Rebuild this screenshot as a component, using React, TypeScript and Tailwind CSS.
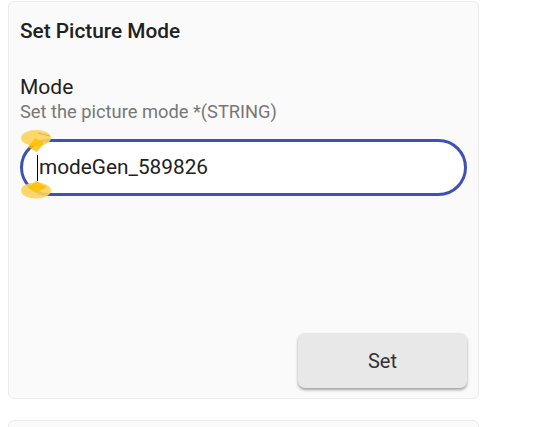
import { FC } from "react";

// selection handles drawn over the left end of the input
const Handles: FC = () => (
  <svg width="40" height="80" viewBox="0 0 40 80" className="absolute left-0 -top-[12px]">
    <ellipse cx="16" cy="11" rx="15" ry="8" fill="#fdd35a" opacity="0.9" />
    <path d="M15 11 L24 16 L17 25 L8 20 Z" fill="#ffbf00" opacity="0.85" />
    <path d="M18 6 L30 9" stroke="#7a6a40" strokeWidth="1" opacity="0.3" />
    <ellipse cx="16" cy="63.5" rx="15" ry="8" fill="#fdd35a" opacity="0.9" />
    <path d="M16 54 L27 60 L17 65 L8 61 Z" fill="#ffbf00" opacity="0.85" />
  </svg>
);

const App: FC = () => {
  return (
    <div className="w-[534px] h-[427px] bg-white overflow-hidden font-['Roboto',sans-serif]">
      <div className="ml-[8px] mt-[1px] w-[471px] h-[398px] bg-[#fafafa] border border-[#ececec] rounded-[6px] flex flex-col px-[11px]">
        <h2 className="mt-[17px] text-[20.8px] leading-[24px] font-medium text-[#212121]">
          Set Picture Mode
        </h2>
        <div className="mt-[31px] text-[21px] leading-[26px] text-[#212121]">Mode</div>
        <div className="mt-[1px] text-[18.3px] leading-[22px] text-[#777777]">
          Set the picture mode *(STRING)
        </div>
        <div className="relative mt-[16px]">
          <div className="h-[57px] w-[447px] rounded-full border-[3px] border-[#3f51b5] bg-white flex items-center pl-[14px]">
            <span className="w-px h-[26px] bg-black mr-[1px]" />
            <span className="text-[20.8px] text-[#212121]">modeGen_589826</span>
          </div>
          <Handles />
        </div>
        <div className="flex-1" />
        <div className="flex justify-end mb-[10px]">
          <button className="w-[169px] h-[55px] rounded-[7px] bg-[#e8e8e8] text-[20px] text-[#333333] shadow-[0_2px_3px_rgba(0,0,0,0.35)]">
            Set
          </button>
        </div>
      </div>
      <div className="ml-[8px] mt-[21px] w-[471px] h-[40px] bg-[#fafafa] border border-[#ececec] rounded-[6px]" />
    </div>
  );
};

export default App;
